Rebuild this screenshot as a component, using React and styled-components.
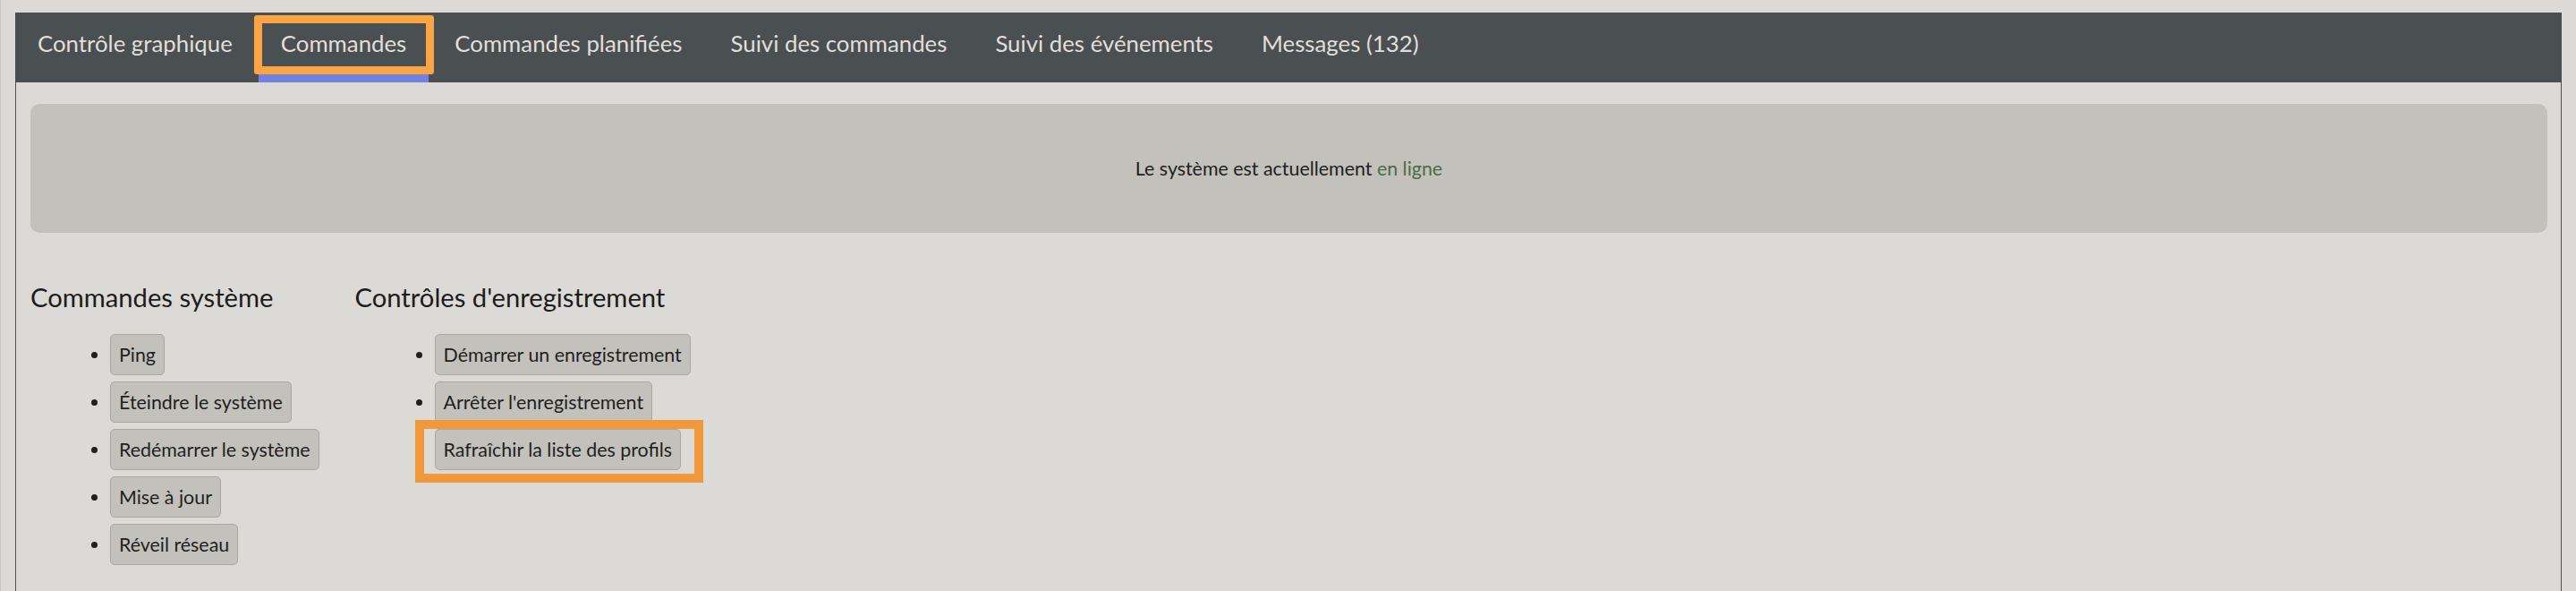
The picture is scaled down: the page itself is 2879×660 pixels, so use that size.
import styled, { createGlobalStyle } from 'styled-components'

const GlobalStyle = createGlobalStyle`
  html, body {
    margin: 0;
    padding: 0;
    background: #dbdad6;
  }
  body {
    font-family: Lato, "Noto Sans", "Liberation Sans", sans-serif;
    color: #1f1f1f;
  }
  * { box-sizing: border-box; }
`

const tabs = [
  'Contrôle graphique',
  'Commandes',
  'Commandes planifiées',
  'Suivi des commandes',
  'Suivi des événements',
  'Messages (132)',
]

const systemCommands = [
  'Ping',
  'Éteindre le système',
  'Redémarrer le système',
  'Mise à jour',
  'Réveil réseau',
]

const recordingControls = [
  { label: 'Démarrer un enregistrement' },
  { label: "Arrêter l'enregistrement" },
  { label: 'Rafraîchir la liste des profils', marked: true },
]

function App() {
  return (
    <Page>
      <GlobalStyle />
      <Frame>
        <NavBar>
          {tabs.map((t) => (
            <Tab key={t} $active={t === 'Commandes'}>
              {t}
              {t === 'Commandes' && <TabHighlight />}
            </Tab>
          ))}
        </NavBar>

        <Content>
          <StatusBanner>
            Le système est actuellement&nbsp;<Online>en ligne</Online>
          </StatusBanner>

          <Columns>
            <Column>
              <Heading>Commandes système</Heading>
              <CommandList>
                {systemCommands.map((c) => (
                  <Item key={c}>
                    <CmdButton>{c}</CmdButton>
                  </Item>
                ))}
              </CommandList>
            </Column>

            <Column>
              <Heading>Contrôles d'enregistrement</Heading>
              <CommandList>
                {recordingControls.map((c) => (
                  <Item key={c.label}>
                    <CmdButton>{c.label}</CmdButton>
                    {c.marked && <ItemHighlight />}
                  </Item>
                ))}
              </CommandList>
            </Column>
          </Columns>
        </Content>
      </Frame>
    </Page>
  )
}

export default App

const Page = styled.div`
  min-height: 100vh;
  padding: 14px 16px 0 16px;
  border-left: 1px solid #c9c8c4;
  display: flex;
  flex-direction: column;
`

const Frame = styled.div`
  flex: 1;
  border-left: 1px solid #4a4f52;
  border-right: 1px solid #4a4f52;
`

const NavBar = styled.nav`
  display: flex;
  gap: 4px;
  height: 78px;
  background: #4a4f52;
  margin-left: -1px;
  margin-right: -1px;
`

const Tab = styled.div`
  position: relative;
  display: flex;
  align-items: center;
  padding: 0 25px 2px;
  font-size: 25.8px;
  color: #e2dfd9;
  white-space: nowrap;
  border-bottom: 9px solid ${(p) => (p.$active ? '#6f82dd' : 'transparent')};
`

const TabHighlight = styled.span`
  position: absolute;
  left: -5px;
  right: -6px;
  top: 3px;
  bottom: 0;
  border: 9px solid #fba443;
  border-radius: 3px;
  pointer-events: none;
`

const Content = styled.main`
  padding: 24px 15px 0 16px;
`

const StatusBanner = styled.div`
  height: 144px;
  border-radius: 10px;
  background: #c2c1bc;
  display: flex;
  align-items: center;
  justify-content: center;
  font-size: 21.4px;
`

const Online = styled.span`
  color: #4c6d46;
`

const Columns = styled.div`
  display: flex;
  gap: 40px;
  margin-top: 54px;
`

const Column = styled.section`
  display: flex;
  flex-direction: column;
`

const Heading = styled.h3`
  margin: 0;
  font-size: 29.2px;
  font-weight: 400;
  line-height: 36px;
  color: #1c1c1c;
`

const CommandList = styled.ul`
  list-style: none;
  margin: 23px 0 0;
  padding: 0 0 0 89px;
  display: flex;
  flex-direction: column;
  align-items: flex-start;
  gap: 7px;
`

const Item = styled.li`
  position: relative;
  display: flex;

  &::before {
    content: '';
    position: absolute;
    left: -21px;
    top: 20px;
    width: 7px;
    height: 7px;
    border-radius: 50%;
    background: #1f1f1f;
  }
`

const ItemHighlight = styled.span`
  position: absolute;
  left: -22px;
  right: -25px;
  top: -10px;
  bottom: -14px;
  border: 10px solid #f0983a;
  pointer-events: none;
`

const CmdButton = styled.button`
  font-family: inherit;
  font-size: 21.4px;
  line-height: 26px;
  padding: 9px 9px;
  color: #1f1f1f;
  background: #c2c1bc;
  border: 1px solid #a8a7a2;
  border-radius: 5px;
  white-space: nowrap;
  cursor: pointer;
`
